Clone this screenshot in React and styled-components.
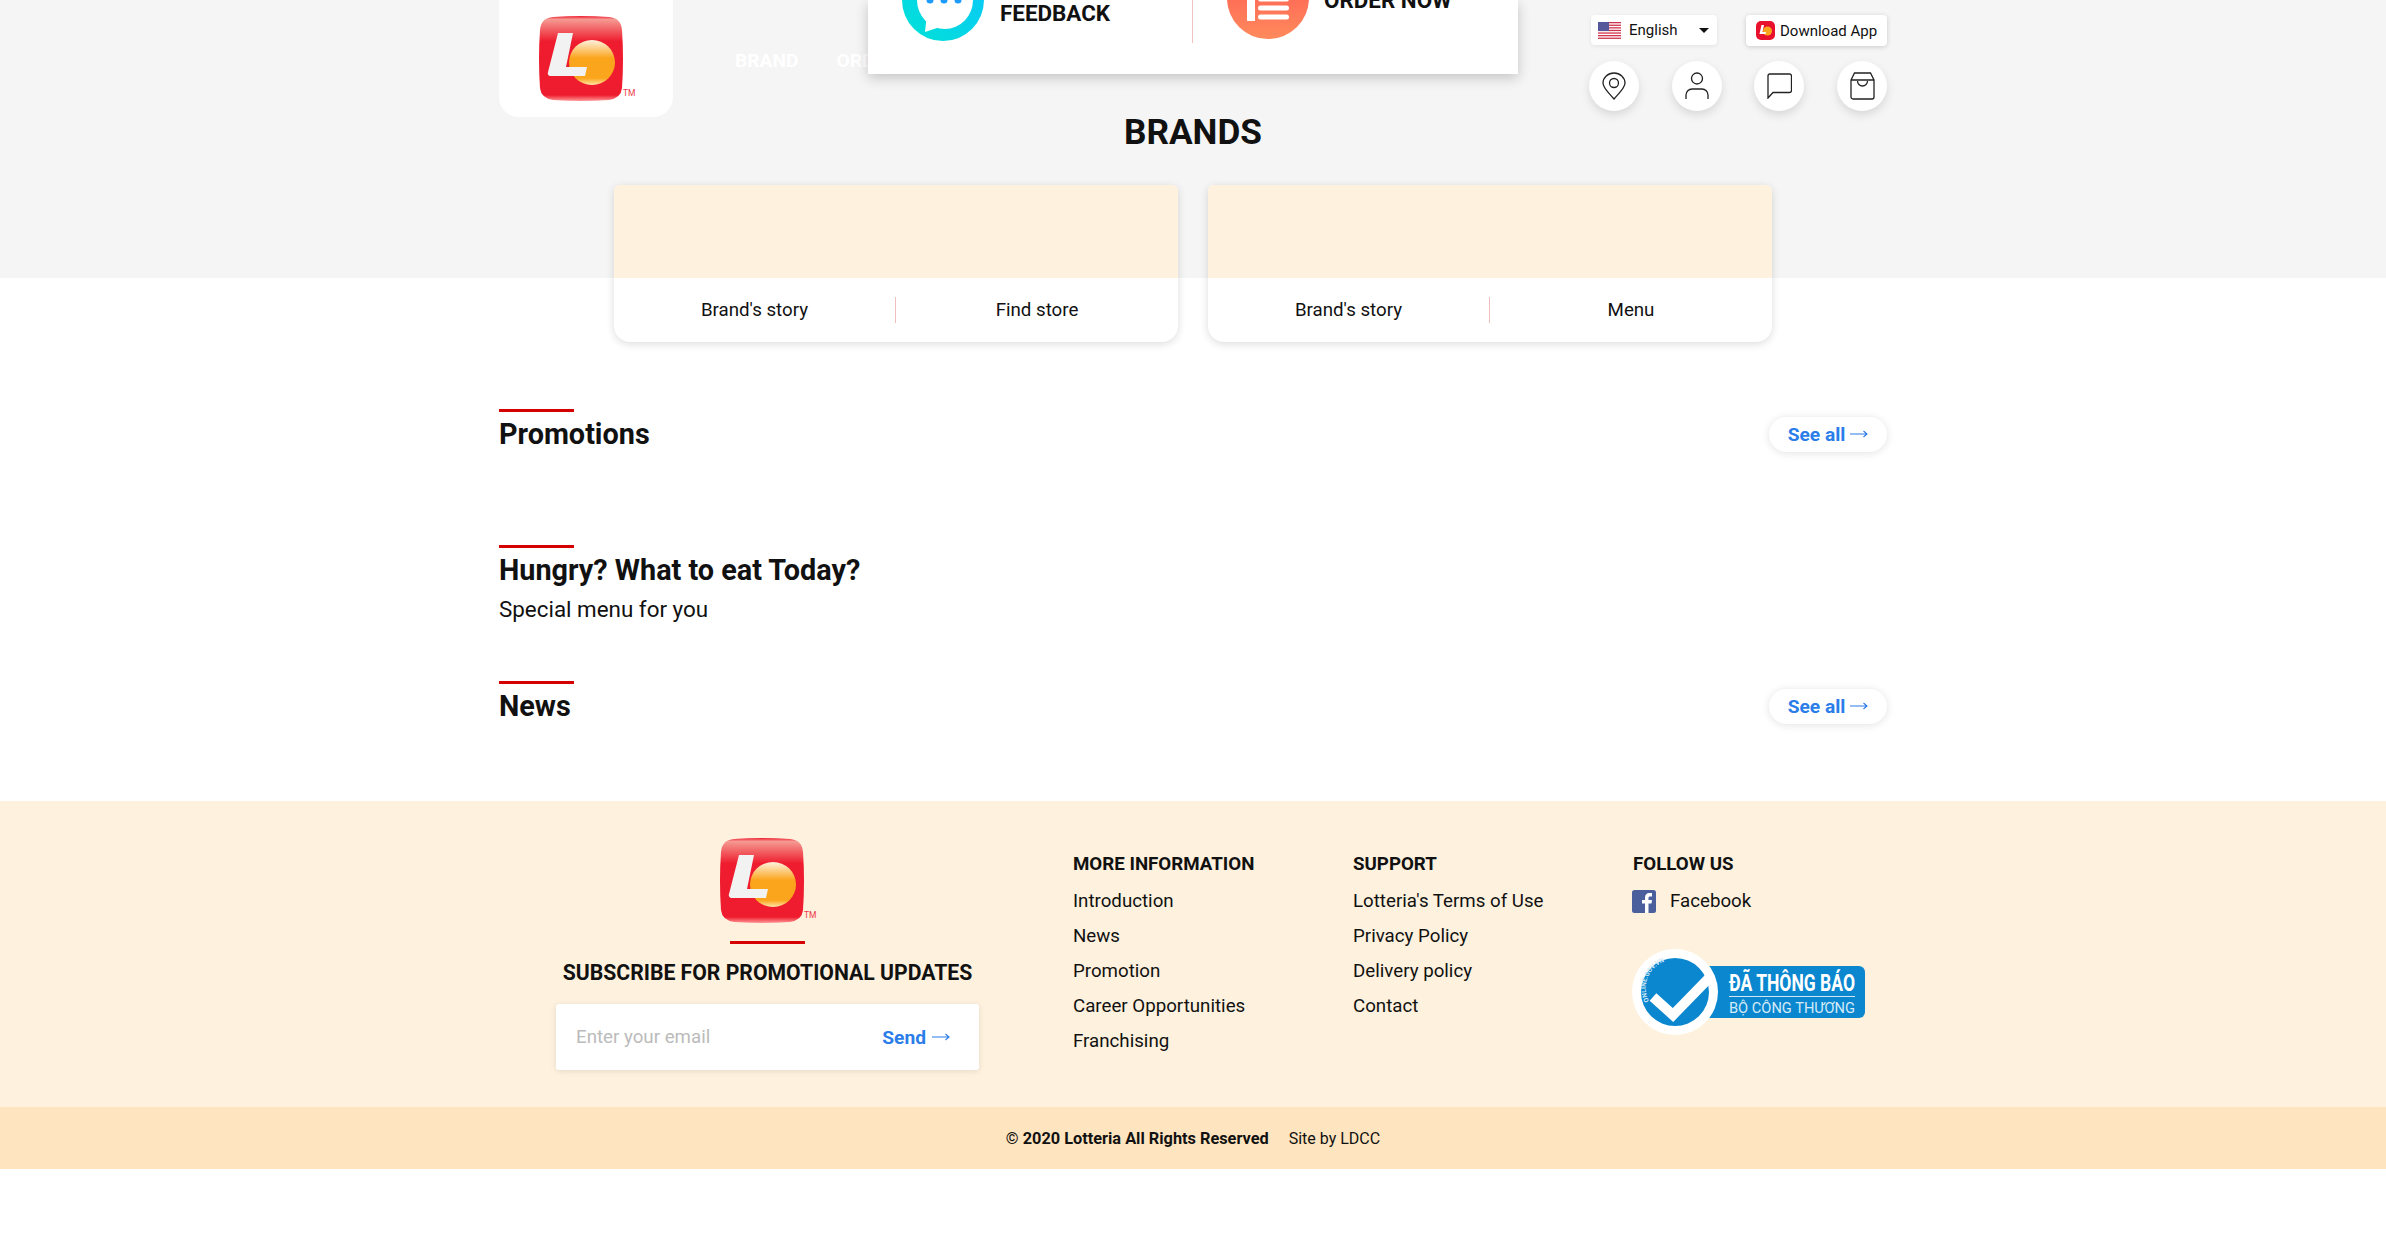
import React from "react";
import styled, { createGlobalStyle } from "styled-components";

const Global = createGlobalStyle`
  html, body { margin: 0; padding: 0; background: #fff; }
  body { font-family: Roboto, "Liberation Sans", sans-serif; color: #111; height: 1237px; overflow: hidden; }
  * { box-sizing: border-box; }
`;
const Page = styled.div`display: flex; flex-direction: column; width: 2386px;`;
const Top = styled.header`position: relative; height: 278px; background: #f5f5f5;`;
const Container = styled.div`width: 1388px; margin: 0 auto;`;
const Bar = styled(Container)`display: flex; justify-content: space-between; align-items: flex-start;`;
const LogoCard = styled.div`
  width: 174px; height: 117px; background: #fff; border-radius: 0 0 20px 20px;
  display: flex; padding: 16px 0 0 40px;
`;
const Left = styled.div`display: flex; align-items: flex-start;`;
const Nav = styled.nav`display: flex; gap: 38px; margin: 49px 0 0 62px;`;
const NavItem = styled.span`color: #fff; font-weight: 700; font-size: 19.2px; line-height: 24px;`;
const Menu = styled.div`
  position: absolute; left: 868px; top: 0; width: 650px; height: 74px; background: #fff;
  box-shadow: 0 4px 12px rgba(0,0,0,.2); display: flex;
`;
const MenuCell = styled.div`position: relative; flex: 1; ${p => p.$first ? "border-right: 1px solid #f1c4c4; height: 43px; flex: 0 0 325px;" : ""}`;
const MenuIcon = styled.svg`position: absolute; left: ${p => p.$x}px; top: -41px; width: 82px; height: 82px;`;
const MenuText = styled.span`
  position: absolute; left: ${p => p.$x}px; top: ${p => p.$y}px; font-weight: 700; font-size: 22.4px; line-height: 27px; white-space: nowrap;
`;
const Right = styled.div`display: flex; flex-direction: column; align-items: flex-end; gap: 15px; padding-top: 15px;`;
const Pills = styled.div`display: flex; gap: 29px; height: 31px;`;
const Lang = styled.div`
  width: 126px; height: 30px; background: #fff; border-radius: 4px; display: flex; align-items: center;
  padding: 0 8px 0 7px; font-size: 15px; box-shadow: 0 1px 4px rgba(0,0,0,.08);
`;
const LangLabel = styled.span`margin-left: 8px; flex: 1;`;
const Caret = styled.span`width: 0; height: 0; border: 5px solid transparent; border-top: 5px solid #111; border-bottom: 0;`;
const App2 = styled.div`
  width: 141px; height: 31px; background: #fff; border-radius: 4px; display: flex; align-items: center; gap: 5px;
  padding-left: 10px; font-size: 15px; box-shadow: 0 1px 5px rgba(0,0,0,.18); white-space: nowrap;
`;
const Rounds = styled.div`display: flex; gap: 32.67px;`;
const Round = styled.div`
  width: 50px; height: 50px; border-radius: 50%; background: #fff; display: flex; align-items: center; justify-content: center;
  box-shadow: 0 4px 10px rgba(0,0,0,.12);
`;
const BrandsTitle = styled.h1`
  position: absolute; left: 0; right: 0; top: 112px; margin: 0; text-align: center; font-weight: 700; font-size: 35.2px; line-height: 40px; color: #111;
`;
const Cards = styled.div`position: absolute; left: 614px; top: 185px; display: flex; gap: 30px;`;
const Card = styled.div`width: 564px; height: 157px; background: #fff; border-radius: 6px 6px 16px 16px; box-shadow: 0 2px 8px rgba(0,0,0,.14); overflow: hidden;`;
const CardImage = styled.div`height: 93px; background: #fef1de;`;
const CardLinks = styled.div`height: 64px; display: grid; grid-template-columns: 1fr 1fr; align-items: center; font-size: 18.72px; text-align: center;`;
const CardLink = styled.span`line-height: 26px; ${p => p.$divided ? "border-right: 1px solid #efbfbf;" : ""}`;
const Main = styled(Container)`padding-top: 131px; height: 523px;`;
const Section = styled.section`height: ${p => p.$h}px; position: relative;`;
const Rule = styled.div`width: 75px; height: 3px; background: #d50000;`;
const HeadRow = styled.div`display: flex; justify-content: space-between; align-items: center; margin-top: 2px; height: 40px;`;
const H2 = styled.h2`margin: 0; font-size: 28.8px; line-height: 40px; font-weight: 700; color: #111;`;
const Sub = styled.p`margin: 4px 0 0; font-size: 22.4px; line-height: 30px; color: #111;`;
const SeeAll = styled.a`
  width: 118px; height: 35px; border-radius: 18px; background: #fff; box-shadow: 0 1px 8px rgba(0,0,0,.12);
  color: #2b7de9; font-weight: 700; font-size: 19.2px; display: flex; align-items: center; justify-content: center; gap: 5px;
`;
const Footer = styled.footer`height: 306px; background: #fef1de;`;
const FooterGrid = styled(Container)`display: flex; height: 100%;`;
const Sub1 = styled.div`flex: 0 0 574px; display: flex; flex-direction: column; padding: 37px 0 0 57px;`;
const FootLogo = styled.div`margin-left: 164px; height: 86px;`;
const FootRule = styled.div`width: 75px; height: 3px; background: #d50000; margin: 17px 0 0 174px;`;
const SubTitle = styled.h3`margin: 16px 0 0; width: 423px; text-align: center; font-size: 21.2px; line-height: 26px; font-weight: 700; white-space: nowrap; color: #111;`;
const Form = styled.div`
  margin-top: 18px; width: 423px; height: 66px; background: #fff; border-radius: 3px; box-shadow: 0 1px 6px rgba(0,0,0,.1);
  display: flex; align-items: center; justify-content: space-between; padding: 0 29px 0 20px; font-size: 18.72px;
`;
const Placeholder = styled.span`color: #bbb;`;
const Send = styled.span`color: #2b7de9; font-weight: 700; font-size: 19.2px; display: flex; align-items: center; gap: 6px;`;
const Col = styled.div`flex: 0 0 ${p => p.$w}px; padding-top: 51px; font-size: 18.72px;`;
const ColHead = styled.h4`margin: 0 0 8px; font-size: 18.72px; line-height: 24px; font-weight: 700; color: #111;`;
const ColLink = styled.div`height: 35px; line-height: 35px; color: #111; display: flex; align-items: center;`;
const FbIcon = styled.svg`margin-left: -1px; flex: none;`;
const FbText = styled.span`margin-left: 14px;`;
const Badge = styled.svg`display: block; margin: 30px 0 0 -1px;`;
const Strip = styled.div`height: 62px; background: #ffe5bf; display: flex; align-items: center; justify-content: center; gap: 20px; font-size: 16px;`;
const Copy = styled.b`font-weight: 700; font-size: 16.32px;`;

const Logo = ({ id = "a" }) => (
  <svg width="97" height="86" viewBox="0 0 97 86">
    <defs>
      <linearGradient id={id + "g"} x1="0" y1="0" x2="0" y2="1">
        <stop offset="0" stopColor="#ee1c2e" /><stop offset=".04" stopColor="#f59a92" /><stop offset=".3" stopColor="#ee1c2e" /><stop offset=".93" stopColor="#ee1c2e" /><stop offset="1" stopColor="#f99" />
      </linearGradient>
      <linearGradient id={id + "o"} x1="0" y1="0" x2="0" y2="1">
        <stop offset="0" stopColor="#fff2df" /><stop offset=".4" stopColor="#fba51d" /><stop offset=".85" stopColor="#fba51d" /><stop offset="1" stopColor="#ffe9a8" />
      </linearGradient>
    </defs>
    <path d="M14 1 Q42 -1 70 1 Q82 2 83 14 Q85 43 83 72 Q82 82 70 84 Q42 86 14 84 Q2 82 1 72 Q-1 43 1 14 Q2 2 14 1Z" fill={`url(#${id}g)`} />
    <ellipse cx="53" cy="46.500" rx="23" ry="22.500" fill={`url(#${id}o)`} />
    <path d="M19 17 L34 17 L27 51 L48 51 L46 60 L11 60 Q8 59 9 56 Z" fill="#f2f2f2" />
    <text x="84" y="80" fontSize="8.500" fill="#ee3b4a" fontFamily="Roboto, sans-serif">TM</text>
  </svg>
);

const Arrow = () => (
  <svg width="18" height="10" viewBox="0 0 18 10" fill="none" stroke="#2b7de9" strokeWidth="1.100"><path d="M0 5h17M13.500 2l3.500 3-3.500 3" /></svg>
);

const Brand = ({ second }) => (
  <Card>
    <CardImage />
    <CardLinks>
      <CardLink $divided>Brand's story</CardLink>
      <CardLink>{second}</CardLink>
    </CardLinks>
  </Card>
);

export default function App() {
  return (
    <Page>
      <Global />
      <Top>
        <Bar>
          <Left>
            <LogoCard><Logo id="t" /></LogoCard>
            <Nav><NavItem>BRAND</NavItem><NavItem>ORDER</NavItem></Nav>
          </Left>
          <Right>
            <Pills>
              <Lang>
                <svg width="23" height="17" viewBox="0 0 23 17">
                  <rect width="23" height="17" fill="#fff" />
                  {[0, 2.6, 5.2, 7.8, 10.4, 13, 15.6].map(y => <rect key={y} y={y} width="23" height="1.3" fill="#d0344c" />)}
                  <rect width="11" height="9" fill="#55589a" />
                </svg>
                <LangLabel>English</LangLabel>
                <Caret />
              </Lang>
              <App2>
                <svg width="19" height="19" viewBox="0 0 19 19">
                  <rect width="19" height="19" rx="5" fill="#e8112d" />
                  <circle cx="11.500" cy="10" r="4.500" fill="#fba51d" />
                  <path d="M5.500 4h2.500L6.500 11H10l-.5 2H3.500z" fill="#fff" />
                </svg>
                Download App
              </App2>
            </Pills>
            <Rounds>
              <Round>
                <svg width="24" height="28" viewBox="0 0 24 28" fill="none" stroke="#222" strokeWidth="1.300"><path d="M12 27C6 20 1 16 1 11a11 10 0 0 1 22 0C23 16 18 20 12 27z" /><circle cx="12" cy="11" r="4.500" /></svg>
              </Round>
              <Round>
                <svg width="24" height="28" viewBox="0 0 24 28" fill="none" stroke="#222" strokeWidth="1.300"><circle cx="12" cy="6.500" r="5.500" /><path d="M1 27v-4a6 6 0 0 1 6-6h10a6 6 0 0 1 6 6v4" /></svg>
              </Round>
              <Round>
                <svg width="25" height="26" viewBox="0 0 25 26" fill="none" stroke="#222" strokeWidth="1.300"><path d="M1 25V3a2 2 0 0 1 2-2h19.500a2 2 0 0 1 2 2v14.500a2 2 0 0 1-2 2H6z" /></svg>
              </Round>
              <Round>
                <svg width="25" height="28" viewBox="0 0 25 28" fill="none" stroke="#222" strokeWidth="1.300"><path d="M1 8L4.500 1h16L24 8v17a2 2 0 0 1-2 2H3a2 2 0 0 1-2-2zM1 8h23M7.500 9a5 5 0 0 0 10 0" /></svg>
              </Round>
            </Rounds>
          </Right>
        </Bar>
        <Menu>
          <MenuCell $first>
            <MenuIcon $x={34} viewBox="0 0 82 82">
              <defs><linearGradient id="cy" x1="1" y1="0" x2="0" y2="1"><stop offset="0" stopColor="#0cc5fb" /><stop offset="1" stopColor="#00e2d6" /></linearGradient></defs>
              <circle cx="41" cy="41" r="41" fill="url(#cy)" />
              <ellipse cx="43" cy="41" rx="28" ry="29" fill="#fff" />
              <path d="M25 55L23 73 44 66z" fill="#fff" />
              <circle cx="28" cy="41" r="3.500" fill="#1c9bfb" /><circle cx="42" cy="41" r="3.500" fill="#1c9bfb" /><circle cx="56" cy="41" r="3.500" fill="#1c9bfb" />
            </MenuIcon>
            <MenuText $x={132} $y={0}>FEEDBACK</MenuText>
          </MenuCell>
          <MenuCell>
            <MenuIcon $x={34} viewBox="0 0 82 82">
              <defs><linearGradient id="or" x1="0" y1="0" x2="0" y2="1"><stop offset="0" stopColor="#ff5252" /><stop offset="1" stopColor="#ff8a5c" /></linearGradient></defs>
              <circle cx="41" cy="39" r="41" fill="url(#or)" />
              <rect x="20" y="30" width="8" height="32" fill="#fff" />
              <rect x="31" y="37.500" width="31" height="5" rx="2.500" fill="#fff" />
              <rect x="31" y="46.500" width="31" height="5" rx="2.500" fill="#fff" />
              <rect x="31" y="55.500" width="31" height="5" rx="2.500" fill="#fff" />
            </MenuIcon>
            <MenuText $x={131} $y={-13}>ORDER NOW</MenuText>
          </MenuCell>
        </Menu>
        <BrandsTitle>BRANDS</BrandsTitle>
        <Cards>
          <Brand second="Find store" />
          <Brand second="Menu" />
        </Cards>
      </Top>
      <Main>
        <Section $h={136}>
          <Rule />
          <HeadRow><H2>Promotions</H2><SeeAll>See all <Arrow /></SeeAll></HeadRow>
        </Section>
        <Section $h={136}>
          <Rule />
          <HeadRow><H2>Hungry? What to eat Today?</H2></HeadRow>
          <Sub>Special menu for you</Sub>
        </Section>
        <Section $h={120}>
          <Rule />
          <HeadRow><H2>News</H2><SeeAll>See all <Arrow /></SeeAll></HeadRow>
        </Section>
      </Main>
      <Footer>
        <FooterGrid>
          <Sub1>
            <FootLogo><Logo id="f" /></FootLogo>
            <FootRule />
            <SubTitle>SUBSCRIBE FOR PROMOTIONAL UPDATES</SubTitle>
            <Form><Placeholder>Enter your email</Placeholder><Send>Send <Arrow /></Send></Form>
          </Sub1>
          <Col $w={280}>
            <ColHead>MORE INFORMATION</ColHead>
            {["Introduction", "News", "Promotion", "Career Opportunities", "Franchising"].map(t => <ColLink key={t}>{t}</ColLink>)}
          </Col>
          <Col $w={280}>
            <ColHead>SUPPORT</ColHead>
            {["Lotteria's Terms of Use", "Privacy Policy", "Delivery policy", "Contact"].map(t => <ColLink key={t}>{t}</ColLink>)}
          </Col>
          <Col $w={254}>
            <ColHead>FOLLOW US</ColHead>
            <ColLink>
              <FbIcon width="24" height="23" viewBox="0 0 24 23"><rect width="24" height="23" rx="2.500" fill="#4a5f9c" /><path d="M13 23V13.500h-3V10h3V7.500C13 4.500 15 3 17 3h3v3.500h-2c-1 0-1.500.5-1.500 1.500v2H20l-.5 3.500h-3V23z" fill="#fff" /></FbIcon>
              <FbText>Facebook</FbText>
            </ColLink>
            <Badge width="234" height="86" viewBox="0 0 234 86">
              <rect x="70" y="17" width="163" height="52" rx="6" fill="#0a87cf" />
              <circle cx="43" cy="43" r="43" fill="#fff" />
              <circle cx="43" cy="43" r="34" fill="#0a87cf" />
              <path d="M21 48L41 66L78 28" fill="none" stroke="#fff" strokeWidth="10" />
              <path id="arc" d="M17 52A27.500 27.500 0 0 1 66 26" fill="none" />
              <text fontFamily="Roboto, sans-serif" fontWeight="700" fontSize="6.500" fill="#cfe6f5"><textPath href="#arc">ONLINE.GOV.VN</textPath></text>
              <text x="97" y="42" fontFamily="Roboto, sans-serif" fontWeight="700" fontSize="23" fill="#fff" textLength="126" lengthAdjust="spacingAndGlyphs">ĐÃ THÔNG BÁO</text>
              <rect x="97" y="47" width="126" height="1" fill="#cfe6f5" />
              <text x="97" y="64" fontFamily="Roboto, sans-serif" fontSize="15" fill="#d5ebf8" textLength="126" lengthAdjust="spacingAndGlyphs">BỘ CÔNG THƯƠNG</text>
            </Badge>
          </Col>
        </FooterGrid>
      </Footer>
      <Strip><Copy>© 2020 Lotteria All Rights Reserved</Copy><span>Site by LDCC</span></Strip>
    </Page>
  );
}
